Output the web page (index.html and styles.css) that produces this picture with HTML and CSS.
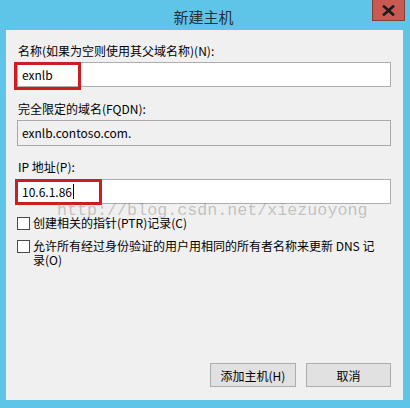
FILE: index.html
```html
<!DOCTYPE html>
<html lang="zh-CN">
<head>
<meta charset="utf-8">
<title>新建主机</title>
<link rel="stylesheet" href="styles.css">
</head>
<body>
<div class="window">
  <div class="titlebar">
    <span></span>
    <span class="title">新建主机</span>
    <button class="close" type="button" aria-label="关闭">
      <svg width="13" height="11" viewBox="0 0 13 11"><path d="M2 1.5 L11 9.5 M11 1.5 L2 9.5" stroke="#1a1a1a" stroke-width="2.6" stroke-linecap="square"/></svg>
    </button>
  </div>
  <div class="content">
    <div class="field">
      <label class="label">名称(如果为空则使用其父域名称)(N):</label>
      <div class="input">
        <span class="text">exnlb</span>
        <span class="mark mark-name"></span>
      </div>
    </div>
    <div class="field field-fqdn">
      <label class="label">完全限定的域名(FQDN):</label>
      <div class="input readonly"><span class="text">exnlb.contoso.com.</span></div>
    </div>
    <div class="field field-ip">
      <label class="label">IP 地址(P):</label>
      <div class="input">
        <span class="text">10.6.1.86</span><span class="caret"></span>
        <span class="mark mark-ip"></span>
      </div>
    </div>
    <div class="check check-first">
      <span class="box"></span>
      <span class="check-text">创建相关的指针(PTR)记录(C)</span>
    </div>
    <div class="check check-second">
      <span class="box"></span>
      <span class="check-text">允许所有经过身份验证的用户用相同的所有者名称来更新 DNS 记<br>录(O)</span>
    </div>
    <div class="buttons">
      <button class="btn btn-add" type="button">添加主机(H)</button>
      <button class="btn btn-cancel" type="button">取消</button>
    </div>
  </div>
  <div class="watermark">http://blog.csdn.net/xiezuoyong</div>
</div>
</body>
</html>
```

FILE: styles.css
```css
* { box-sizing: border-box; }

html, body {
  margin: 0;
  padding: 0;
  background: #5fc5e8;
}

body {
  font-family: "Noto Sans CJK SC", "Noto Sans", sans-serif;
  font-size: 12px;
  color: #000;
}

.window {
  position: relative;
  width: 410px;
  height: 408px;
  background: #5fc5e8;
  display: flex;
  flex-direction: column;
}

.titlebar {
  height: 30px;
  display: grid;
  grid-template-columns: 1fr auto 1fr;
  align-items: start;
}

.title {
  font-size: 15px;
  line-height: 15px;
  margin-top: 9px;
  margin-right: 3px;
  color: #203238;
}

.close {
  justify-self: end;
  width: 33px;
  height: 21px;
  margin: 0 5px 0 0;
  padding: 0;
  border: 1px solid #8c3a36;
  border-top: none;
  background: #c75a52;
  display: flex;
  align-items: center;
  justify-content: center;
}

.content {
  flex: 1;
  margin: 0 7px 8px 6px;
  background: #f0f0f0;
  padding: 13px 12px 13px 11px;
  display: flex;
  flex-direction: column;
}

.field {
  display: flex;
  flex-direction: column;
  gap: 3px;
}

.field-fqdn { margin-top: 14px; }
.field-ip { margin-top: 13px; }
.field-ip .label { margin-bottom: 1px; }

.label {
  line-height: 16px;
  padding-left: 1px;
}

.input {
  position: relative;
  height: 25px;
  border: 1px solid #abadb3;
  background: #fff;
  display: flex;
  align-items: center;
  padding-left: 4px;
}

.input.readonly {
  height: 26px;
  background: #f0f0f0;
  border-color: #a8a8a8;
}

.text { line-height: 16px; }

.caret {
  display: inline-block;
  width: 1px;
  height: 15px;
  background: #000;
  margin-left: 1px;
}

.mark {
  position: absolute;
  border: 3px solid #cc1e22;
  pointer-events: none;
}

.mark-name {
  left: -4px;
  top: -1px;
  width: 67px;
  height: 28px;
}

.mark-ip {
  left: -3px;
  top: -1px;
  width: 87px;
  height: 26px;
}

.check {
  display: flex;
  align-items: flex-start;
  gap: 3px;
  padding-left: 0;
}

.check-first { margin-top: 11px; line-height: 16px; }
.check-first .box { margin-top: 2px; }

.check-second { margin-top: 8px; line-height: 14px; }
.check-second .box { margin-top: 1px; }

.box {
  flex: none;
  width: 13px;
  height: 13px;
  border: 1px solid #4a4a4a;
  background: #fff;
}

.buttons {
  margin-top: auto;
  display: flex;
  justify-content: flex-end;
  gap: 10px;
}

.btn {
  height: 24px;
  border: 1px solid #adadad;
  background: #e1e1e1;
  font-family: "Noto Sans CJK SC", "Noto Sans", sans-serif;
  font-size: 12px;
  color: #000;
  padding: 0;
}

.btn-add { width: 86px; }
.btn-cancel { width: 85px; }

.watermark {
  position: absolute;
  left: 57px;
  top: 202px;
  font-family: "Liberation Mono", monospace;
  font-size: 16.7px;
  line-height: 17px;
  color: rgba(120, 120, 120, 0.4);
  white-space: nowrap;
  pointer-events: none;
}
```
